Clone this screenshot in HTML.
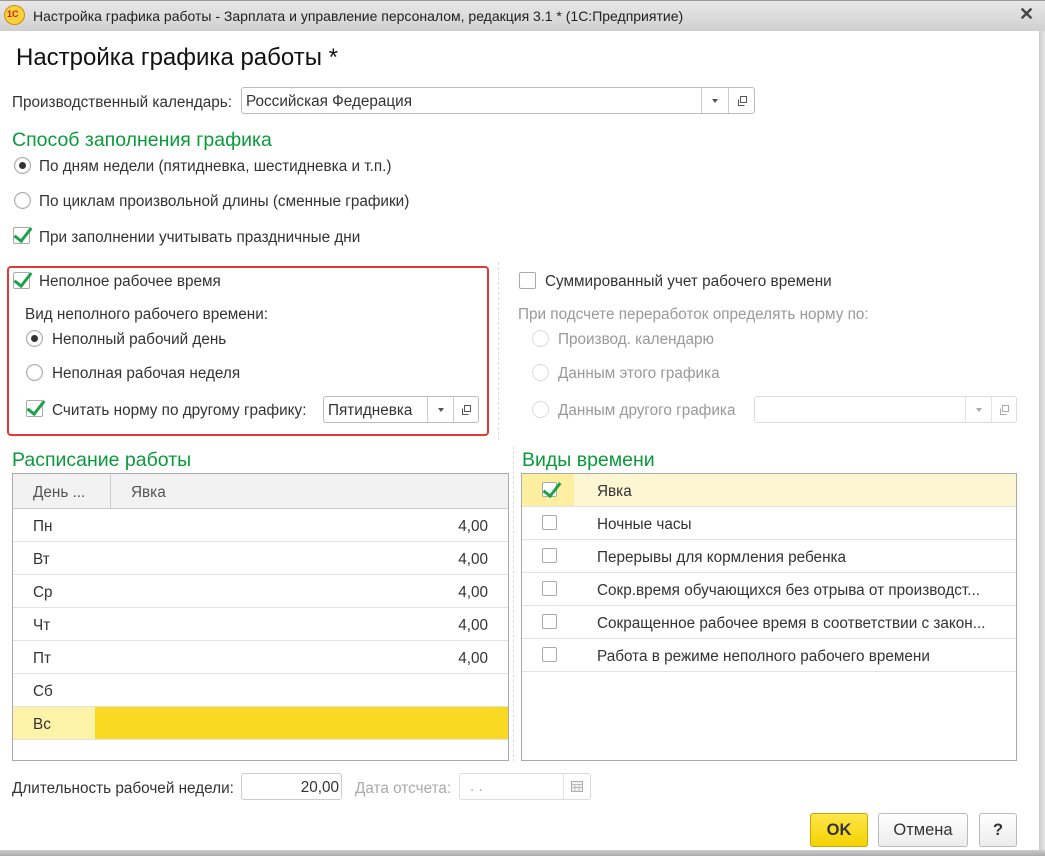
<!DOCTYPE html>
<html><head><meta charset="utf-8">
<style>
*{box-sizing:border-box;margin:0;padding:0}
body{width:1045px;height:856px;position:relative;overflow:hidden;background:#fff;font-family:"Liberation Sans","Noto Sans CJK SC",sans-serif;font-size:15.3px;color:#333}
.a{position:absolute;white-space:nowrap}
.t{position:absolute;white-space:nowrap;line-height:18px;margin-top:2px}
.g{color:#999}
.h{color:#0a9a3a;font-size:19.5px;line-height:22px}
.rad{position:absolute;width:17px;height:17px;border:1px solid #aaa;border-radius:50%;background:#fff;box-shadow:inset 0 0 0 1px #eee}
.rad.on::after{content:"";position:absolute;left:4px;top:4px;width:7px;height:7px;border-radius:50%;background:#333}
.rad.dis{border-color:#ddd;box-shadow:none}
.cb{position:absolute;width:17px;height:17px;border:1px solid #aaa;border-radius:2px;background:#fff}
.cb.on::after{content:"";position:absolute;left:4px;top:-4px;width:7px;height:15px;border:solid #1aa34a;border-width:0 3px 3px 0;transform:rotate(38deg)}
.fld{position:absolute;border:1px solid #bbb;border-radius:3px;background:#fff;height:27px}
.fld .t{margin-top:1px}
.dd{position:absolute;top:0;bottom:0;border-left:1px solid #ccc}
.arr{position:absolute;top:11px;width:0;height:0;border-left:3px solid transparent;border-right:3px solid transparent;border-top:4px solid #555}
.btn{position:absolute;border:1px solid #bbb;border-radius:3px;background:linear-gradient(#fff,#ececec);height:34px;text-align:center;line-height:32px;font-size:16.5px}
.row{position:absolute;left:0;right:0;height:33px;border-bottom:1px solid #e2e2e2}
</style></head><body>
<div class="a" style="left:0;top:0;width:1045px;height:31px;background:linear-gradient(#e8e8e8,#d0d0d0);border-top:1px solid #999"></div>
<div class="a" style="left:4px;top:5px;width:21px;height:20px;border-radius:50%;background:#f7d23a;border:1px solid #d08a10"></div>
<div class="a" style="left:7px;top:9px;font-size:9px;font-weight:bold;color:#d21c1c">1С</div>
<div class="t" style="left:33px;top:5px;font-size:14px;color:#222">Настройка графика работы - Зарплата и управление персоналом, редакция 3.1 * (1С:Предприятие)</div>
<div class="t" style="left:1019px;top:3px;font-size:18px;font-weight:bold;color:#444">✕</div>
<div class="a" style="left:1039px;top:31px;width:6px;height:825px;background:linear-gradient(90deg,#ccc,#e6e6e6)"></div>
<div class="a" style="left:0;top:850px;width:1045px;height:6px;background:linear-gradient(#ccc,#aaa)"></div>

<div class="t" style="left:16px;top:42px;font-size:24px;line-height:28px;color:#111">Настройка графика работы *</div>

<div class="t" style="left:12px;top:92px">Производственный календарь:</div>
<div class="fld" style="left:241px;top:87px;width:514px"><div class="t" style="left:4px;top:4px">Российская Федерация</div>
<div class="dd" style="left:459px"></div><div class="arr" style="left:470px"></div><div class="dd" style="left:486px"></div>
<svg class="a" style="left:494px;top:7px" width="12" height="12"><rect x="4.5" y="1.5" width="6" height="6" fill="none" stroke="#555"/><path d="M2.5 4.5v6h6" fill="none" stroke="#555"/></svg></div>

<div class="t h" style="left:12px;top:127px">Способ заполнения графика</div>
<div class="rad on" style="left:14px;top:157px"></div><div class="t" style="left:39px;top:156px">По дням недели (пятидневка, шестидневка и т.п.)</div>
<div class="rad" style="left:14px;top:192px"></div><div class="t" style="left:39px;top:191px">По циклам произвольной длины (сменные графики)</div>
<div class="cb on" style="left:13px;top:227px"></div><div class="t" style="left:39px;top:227px">При заполнении учитывать праздничные дни</div>

<div class="a" style="left:7px;top:266px;width:482px;height:170px;border:2px solid #e53935;border-radius:4px"></div>
<div class="cb on" style="left:13px;top:272px"></div><div class="t" style="left:39px;top:271px">Неполное рабочее время</div>
<div class="t" style="left:25px;top:304px">Вид неполного рабочего времени:</div>
<div class="rad on" style="left:26px;top:330px"></div><div class="t" style="left:52px;top:329px">Неполный рабочий день</div>
<div class="rad" style="left:26px;top:364px"></div><div class="t" style="left:52px;top:363px">Неполная рабочая неделя</div>
<div class="cb on" style="left:26px;top:400px"></div><div class="t" style="left:52px;top:400px">Считать норму по другому графику:</div>
<div class="fld" style="left:323px;top:396px;width:156px"><div class="t" style="left:4px;top:4px">Пятидневка</div>
<div class="dd" style="left:103px"></div><div class="arr" style="left:114px"></div><div class="dd" style="left:129px"></div>
<svg class="a" style="left:136px;top:7px" width="12" height="12"><rect x="4.5" y="1.5" width="6" height="6" fill="none" stroke="#555"/><path d="M2.5 4.5v6h6" fill="none" stroke="#555"/></svg></div>

<div class="a" style="left:498px;top:262px;height:178px;border-left:1px dashed #ddd"></div>
<div class="a" style="left:513px;top:446px;height:316px;border-left:1px dashed #ddd"></div>

<div class="cb" style="left:519px;top:272px"></div><div class="t" style="left:545px;top:271px">Суммированный учет рабочего времени</div>
<div class="t g" style="left:518px;top:304px">При подсчете переработок определять норму по:</div>
<div class="rad dis" style="left:532px;top:330px"></div><div class="t g" style="left:558px;top:329px">Производ. календарю</div>
<div class="rad dis" style="left:532px;top:364px"></div><div class="t g" style="left:558px;top:363px">Данным этого графика</div>
<div class="rad dis" style="left:532px;top:401px"></div><div class="t g" style="left:558px;top:400px">Данным другого графика</div>
<div class="fld" style="left:754px;top:396px;width:263px;border-color:#ddd"><div class="dd" style="left:210px;border-color:#e4e4e4"></div><div class="arr" style="left:221px;border-top-color:#aaa"></div><div class="dd" style="left:236px;border-color:#e4e4e4"></div>
<svg class="a" style="left:243px;top:7px" width="12" height="12"><rect x="4.5" y="1.5" width="6" height="6" fill="none" stroke="#aaa"/><path d="M2.5 4.5v6h6" fill="none" stroke="#aaa"/></svg></div>

<div class="t h" style="left:12px;top:447px">Расписание работы</div>
<div class="t h" style="left:522px;top:447px">Виды времени</div>

<div class="a" style="left:12px;top:473px;width:497px;height:288px;border:1px solid #aaa;overflow:hidden">
 <div class="row" style="top:0;height:35px;background:#f2f2f2;border-bottom:1px solid #ccc"><div class="t" style="left:20px;top:8px;color:#555">День ...</div><div class="a" style="left:97px;top:0;height:34px;border-left:1px solid #ccc"></div><div class="t" style="left:118px;top:8px;color:#555">Явка</div></div>
 <div class="row" style="top:35px"><div class="t" style="left:20px;top:7px">Пн</div><div class="t" style="right:20px;top:7px">4,00</div></div>
 <div class="row" style="top:68px"><div class="t" style="left:20px;top:7px">Вт</div><div class="t" style="right:20px;top:7px">4,00</div></div>
 <div class="row" style="top:101px"><div class="t" style="left:20px;top:7px">Ср</div><div class="t" style="right:20px;top:7px">4,00</div></div>
 <div class="row" style="top:134px"><div class="t" style="left:20px;top:7px">Чт</div><div class="t" style="right:20px;top:7px">4,00</div></div>
 <div class="row" style="top:167px"><div class="t" style="left:20px;top:7px">Пт</div><div class="t" style="right:20px;top:7px">4,00</div></div>
 <div class="row" style="top:200px"><div class="t" style="left:20px;top:7px">Сб</div></div>
 <div class="row" style="top:233px;background:#fad923"><div class="a" style="left:0;top:0;width:82px;height:32px;background:#fdf3a8"></div><div class="t" style="left:20px;top:7px">Вс</div></div>
</div>

<div class="a" style="left:521px;top:473px;width:496px;height:288px;border:1px solid #aaa;overflow:hidden">
 <div class="row" style="top:0;background:#fdf6d2"><div class="a" style="left:0;top:0;width:52px;height:32px;background:#fdef9f"></div><div class="cb on" style="left:20px;top:8px;width:15px;height:15px"></div><div class="t" style="left:75px;top:7px">Явка</div></div>
 <div class="row" style="top:33px"><div class="cb" style="left:20px;top:8px;width:15px;height:15px"></div><div class="t" style="left:75px;top:7px">Ночные часы</div></div>
 <div class="row" style="top:66px"><div class="cb" style="left:20px;top:8px;width:15px;height:15px"></div><div class="t" style="left:75px;top:7px">Перерывы для кормления ребенка</div></div>
 <div class="row" style="top:99px"><div class="cb" style="left:20px;top:8px;width:15px;height:15px"></div><div class="t" style="left:75px;top:7px">Сокр.время обучающихся без отрыва от производст...</div></div>
 <div class="row" style="top:132px"><div class="cb" style="left:20px;top:8px;width:15px;height:15px"></div><div class="t" style="left:75px;top:7px">Сокращенное рабочее время в соответствии с закон...</div></div>
 <div class="row" style="top:165px"><div class="cb" style="left:20px;top:8px;width:15px;height:15px"></div><div class="t" style="left:75px;top:7px">Работа в режиме неполного рабочего времени</div></div>
</div>

<div class="t" style="left:12px;top:778px">Длительность рабочей недели:</div>
<div class="fld" style="left:241px;top:773px;width:101px;border-color:#ccc"><div class="t" style="right:2px;top:4px">20,00</div></div>
<div class="t g" style="left:355px;top:778px;color:#aaa">Дата отсчета:</div>
<div class="fld" style="left:459px;top:773px;width:132px;border-color:#ddd"><div class="t" style="left:10px;top:3px;color:#aaa">. .</div><div class="dd" style="left:103px;border-color:#e4e4e4"></div>
<svg class="a" style="left:111px;top:7px" width="12" height="11"><rect x="0.5" y="0.5" width="11" height="10" fill="#f4f4f4" stroke="#aaa"/><path d="M0 3.5h12M0 6.5h12M4 3v8M8 3v8" stroke="#bbb"/></svg></div>

<div class="btn" style="left:810px;top:813px;width:58px;background:linear-gradient(#fde64a,#f4d200);border-color:#c8a800;font-weight:bold;color:#333">OK</div>
<div class="btn" style="left:878px;top:813px;width:90px">Отмена</div>
<div class="btn" style="left:979px;top:813px;width:38px;font-weight:bold">?</div>
</body></html>
